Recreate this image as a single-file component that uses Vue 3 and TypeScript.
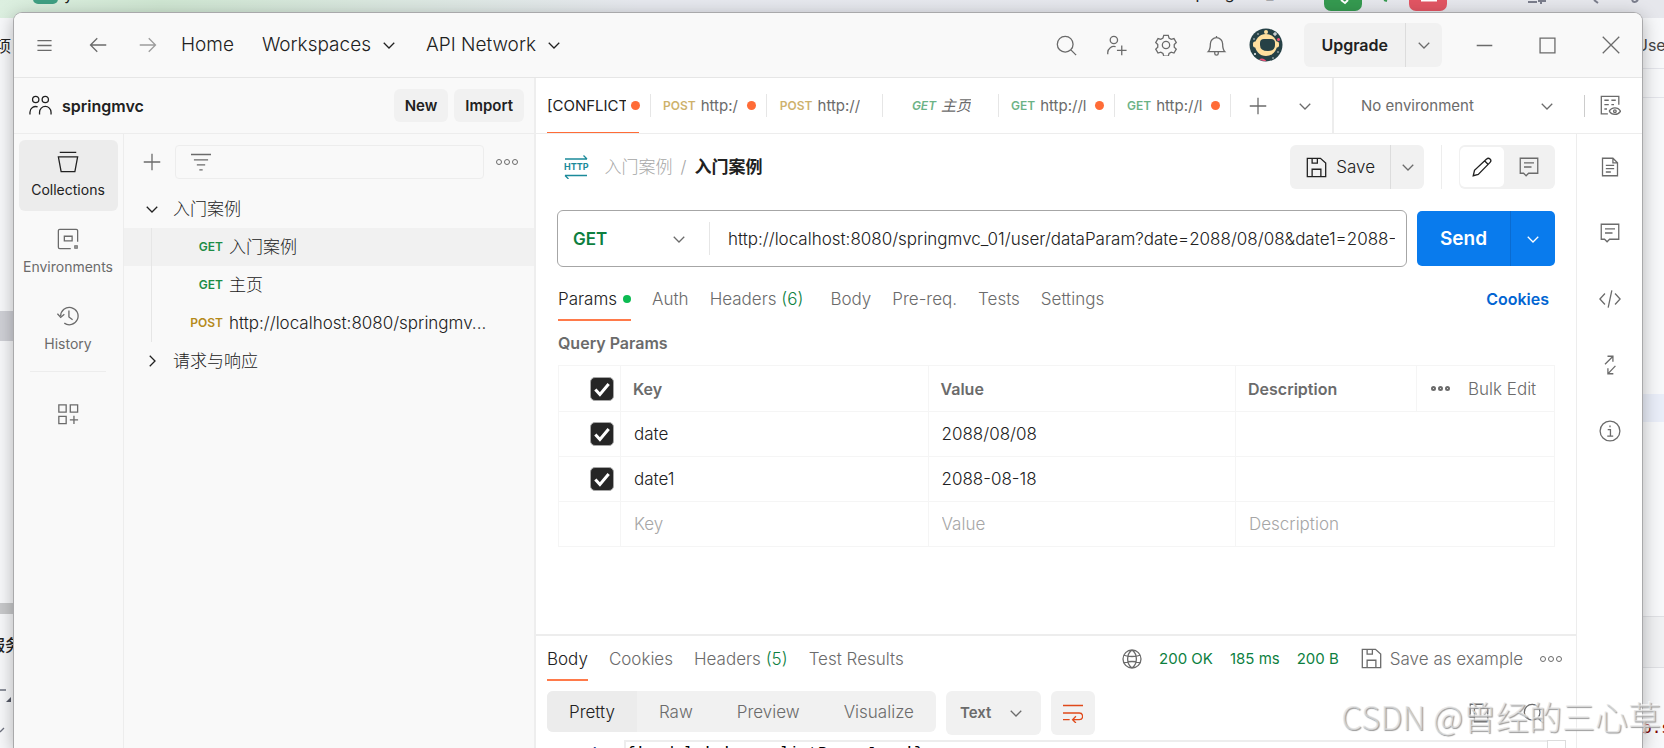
<script setup lang="ts">
import { h, ref } from 'vue'

const shapes: Record<string, string> = {
  chevron: 'M5 9l7 7 7-7',
  chevronRight: 'M9 5l7 7-7 7',
  menu: 'M2 5h20M2 12h20M2 19h20',
  back: 'M23 12H2M11 3l-9 9 9 9',
  forward: 'M1 12h21M13 3l9 9-9 9',
  search: 'M10.5 1.5a9 9 0 1 0 0 18a9 9 0 1 0 0-18M17 17l6 6',
  invite: 'M9 1.5a4.2 4.2 0 1 0 0 8.4a4.2 4.2 0 1 0 0-8.4M2 22v-2a7 7 0 0 1 9-6.600M18 12v11M12.500 17.500h11',
  gear: 'M9.500 1.500h5l.8 3 2.400 1.400 3-.9 2.500 4.300-2.200 2.200v2.800l2.200 2.200-2.500 4.300-3-.9-2.400 1.400-.8 2.800h-5l-.8-2.800-2.400-1.400-3 .9-2.500-4.300 2.200-2.200v-2.800L.8 9.300 3.300 5l3 .9L8.700 4.500zM12 8a4 4 0 1 0 0 8a4 4 0 1 0 0-8',
  bell: 'M2.500 19c2-2 2.500-4 2.500-9a7 7 0 0 1 14 0c0 5 .5 7 2.500 9zM10 19.500v1.500a2 2 0 0 0 4 0v-1.500M12 3V1',
  minus: 'M1 12h22',
  square: 'M1.500 1.500h21v21h-21z',
  close: 'M1 1l22 22M23 1L1 23',
  plus: 'M12 1v22M1 12h22',
  filter: 'M0 3h24M3.500 9.500h17M7 15.500h10M10 21.500h4',
  people: 'M7 2.500a3.300 3.300 0 1 0 0 6.600a3.300 3.300 0 1 0 0-6.600M17 2.500a3.300 3.300 0 1 0 0 6.600a3.300 3.300 0 1 0 0-6.600M1 21.500v-2.500a6 6 0 0 1 8-5.600M11 21.500v-2.500a6 6 0 0 1 12 0v2.500',
  collections: 'M3 1.500h18M1.500 6.500h21L19.500 22.500h-15z',
  environments: 'M22.500 15V3a1.500 1.500 0 0 0-1.500-1.500H3A1.500 1.500 0 0 0 1.500 3v18A1.500 1.500 0 0 0 3 22.500h12M8 9h8.500v5H8zM19.500 19.500h2.500v2.500h-2.500z',
  history: 'M4 12a9.500 9.500 0 1 1 4 7.800M0.500 9.500L4 13.500l4-3.500M13 6v7l4 3',
  apps: 'M2 2h8v8H2zM14.500 2h8v8h-8zM2 14.500h8v8H2zM18.500 14v9M14 18.500h9',
  save: 'M2 1.500h14.500L22.500 7v15.500h-21V1.500zM7 2v5h6V2M7 22v-8h10v8',
  pencil: 'M1.500 22.500l1.500-6.500L17.500 2.500a2.800 2.800 0 0 1 4.200 4L7.500 21zM15 4.500l4.500 4.500',
  comment: 'M1.500 1.500h21v18H11.500l-3 3-3-3h-4zM6 7h12M6 12h9',
  doc: 'M3 1.500h12.500L21 7v15.500H3zM15.500 1.500V7H21M7 10h10M7 14h10M7 18h6',
  code: 'M6.500 6L1 12l5.500 6M17.500 6L23 12l-5.500 6M14 2.500L10 21.500',
  sync: 'M6 11L15 2M9 1.500H15.500V8M18.500 13L10 22M16 22.500H9.500V16',
  info: 'M12 1.200a10.800 10.800 0 1 0 0 21.600a10.800 10.800 0 1 0 0-21.600M9.500 10.500h3v6.500M9 17.500h6.500M12 6v2',
  globe: 'M12 1.200a10.800 10.800 0 1 0 0 21.600a10.800 10.800 0 1 0 0-21.600M12 1.200c-7 5-7 16.600 0 21.600M12 1.200c7 5 7 16.600 0 21.600M2.500 7.500c5 2 14 2 19 0M2.500 16.500c5-2 14-2 19 0',
  envEye: 'M9 21.500H1.500V1.500h20V11M5 6h5M13 6h5M5 11h5M13 11h3M5 16h3M10.500 18.500c3-5 10-5 13 0c-3 5-10 5-13 0M17 17a1.500 1.500 0 1 0 0 3a1.500 1.500 0 1 0 0-3',
  wrap: 'M0 3h24M0 12h19.500a4 4 0 0 1 0 8H12M15.500 16L11.500 20l4 4M0 20h8',
  copy: 'M6.500 6.500h16v16h-16zM17 6V1.500H1.500V17H6',
  http: 'M1 4h22M19.500 0.500L23 4M1 20.500h22M1 20.500L4.500 24',
  tick: 'M4 12.500l5.500 6L20 6',
}

function Icon(props: { name: string; size?: number | string }) {
  const s = Number(props.size ?? 20)
  return h(
    'svg',
    { width: s, height: s, viewBox: '0 0 24 24', fill: 'none', stroke: 'currentColor', 'aria-hidden': 'true' },
    [h('path', { d: shapes[props.name], 'vector-effect': 'non-scaling-stroke' })],
  )
}

interface Tab { method?: string; name: string; dirty?: boolean; italic?: boolean }
const tabs: Tab[] = [
  { name: '[CONFLICT', dirty: true },
  { method: 'POST', name: 'http:/', dirty: true },
  { method: 'POST', name: 'http://' },
  { method: 'GET', name: '主页', italic: true },
  { method: 'GET', name: 'http://l', dirty: true },
  { method: 'GET', name: 'http://l', dirty: true },
]

const rail = [
  { icon: 'collections', label: 'Collections' },
  { icon: 'environments', label: 'Environments' },
  { icon: 'history', label: 'History' },
]

const requests = [
  { method: 'GET', name: '入门案例' },
  { method: 'GET', name: '主页' },
  { method: 'POST', name: 'http://localhost:8080/springmv...' },
]

const requestTabs = [
  { name: 'Params', dot: true },
  { name: 'Auth' },
  { name: 'Headers', count: 6 },
  { name: 'Body' },
  { name: 'Pre-req.' },
  { name: 'Tests' },
  { name: 'Settings' },
]
const responseTabs = [
  { name: 'Body' },
  { name: 'Cookies' },
  { name: 'Headers', count: 5 },
  { name: 'Test Results' },
]
const views = ['Pretty', 'Raw', 'Preview', 'Visualize']
const sideTools = [
  { icon: 'doc', label: 'Documentation' },
  { icon: 'comment', label: 'Comments' },
  { icon: 'code', label: 'Code' },
  { icon: 'sync', label: 'Related requests' },
  { icon: 'info', label: 'Info' },
]

const url = ref('http://localhost:8080/springmvc_01/user/dataParam?date=2088/08/08&date1=2088-08-18')
const params = ref([
  { on: true, key: 'date', value: '2088/08/08', description: '' },
  { on: true, key: 'date1', value: '2088-08-18', description: '' },
])
const allOn = ref(true)
</script>

<template>
  <div class="desktop">
    <div class="ide" aria-hidden="true">
      <div class="ide-top"></div>
      <span class="ide-badge"></span>
      <span class="ide-text project">y</span>
      <span class="ide-text run">springmvc_01</span>
      <span class="ide-btn go"></span>
      <span class="ide-btn stop"></span>
      <svg class="ide-marks" width="330" height="8" viewBox="0 0 330 8" fill="none">
        <path d="M11 0l4 3 3-3" stroke="#fff" stroke-width="2" />
        <path d="M91 0h16" stroke="#fff" stroke-width="3" />
        <path d="M54 0l3 1" stroke="#359a50" stroke-width="2" />
        <path d="M198 2h9M211 0v4M208 1h8M264 0l4 3M302 0q2 4 6 0" stroke="#7a7d8c" stroke-width="2" />
      </svg>
      <svg class="ide-corner" width="13" height="60" viewBox="0 0 13 60" fill="none">
        <path d="M0 5h6M0 47l4-4" stroke="#6c707e" />
        <path d="M11 12v5H6z" fill="#555967" />
      </svg>
      <span class="ide-text title">项目</span>
      <span class="ide-text user">User</span>
      <span class="ide-block a"></span>
      <span class="ide-block b"></span>
      <span class="ide-block c"></span>
      <span class="ide-block d"></span>
      <span class="ide-block e"></span>
      <span class="ide-text service">服务</span>
      <span class="ide-text trace">b.s</span>
    </div>

    <div class="window">
      <header class="topbar">
        <button class="ghost menu" aria-label="Menu"><Icon name="menu" size="17" /></button>
        <button class="ghost back" aria-label="Back"><Icon name="back" size="18" /></button>
        <button class="ghost forward" aria-label="Forward"><Icon name="forward" size="18" /></button>
        <nav class="topnav">
          <a href="#">Home</a>
          <a href="#">Workspaces <Icon name="chevron" size="18" /></a>
          <a href="#">API Network <Icon name="chevron" size="18" /></a>
        </nav>
        <div class="top-tools">
          <button class="ghost" aria-label="Search"><Icon name="search" size="21" /></button>
          <button class="ghost" aria-label="Invite"><Icon name="invite" size="21" /></button>
          <button class="ghost" aria-label="Settings"><Icon name="gear" size="22" /></button>
          <button class="ghost" aria-label="Notifications"><Icon name="bell" size="21" /></button>
          <button class="ghost" aria-label="Account">
            <svg width="34" height="34" viewBox="0 0 34 34">
              <circle cx="17" cy="17" r="16.500" fill="#264146" />
              <path d="M10 31.500a5 5 0 0 1 7.500 1.800 16 16 0 0 1-7.500-1.800z" fill="#ef5079" />
              <circle cx="17" cy="17" r="11" fill="#ffdf9f" />
              <rect x="4" y="13.500" width="26" height="6" rx="2" fill="#ffdf9f" />
              <circle cx="17" cy="4" r="2" fill="#ffdf9f" />
              <path d="M11 15q0-4 4-4h7q4 0 4 4v2q0 6-7 6-8 0-8-6z" fill="#264146" />
              <circle cx="29.500" cy="11.500" r="1.500" fill="#ef5079" />
              <path d="M26 4v4M24 6h4M6 25v2M5 26h2" stroke="#fff" stroke-width="1" />
              <circle cx="9" cy="6" r=".7" fill="#fff" />
              <circle cx="5" cy="11" r=".7" fill="#fff" />
              <circle cx="29" cy="24" r=".7" fill="#fff" />
              <circle cx="24" cy="30" r=".7" fill="#fff" />
            </svg>
          </button>
        </div>
        <div class="split upgrade">
          <button>Upgrade</button>
          <button aria-label="Upgrade options"><Icon name="chevron" size="18" /></button>
        </div>
        <div class="win-tools">
          <button class="ghost" aria-label="Minimize"><Icon name="minus" size="17" /></button>
          <button class="ghost" aria-label="Maximize"><Icon name="square" size="17" /></button>
          <button class="ghost" aria-label="Close"><Icon name="close" size="18" /></button>
        </div>
      </header>

      <div class="shell">
        <aside class="side">
          <div class="workspace">
            <Icon name="people" size="23" />
            <h1>springmvc</h1>
            <button class="soft">New</button>
            <button class="soft">Import</button>
          </div>
          <div class="side-body">
            <nav class="rail">
              <button v-for="(r, i) in rail" :key="r.label" :class="{ active: i === 0 }">
                <Icon :name="r.icon" size="22" />
                <span>{{ r.label }}</span>
              </button>
              <hr />
              <button class="apps" aria-label="Configure sidebar"><Icon name="apps" size="22" /></button>
            </nav>
            <div class="tree">
              <div class="tree-tools">
                <button class="ghost" aria-label="Create"><Icon name="plus" size="18" /></button>
                <label class="filter"><Icon name="filter" size="20" /><input aria-label="Filter collections" /></label>
                <button class="ghost dots" aria-label="More"><i></i><i></i><i></i></button>
              </div>
              <button class="folder"><Icon name="chevron" size="18" />入门案例</button>
              <ul>
                <li v-for="(r, i) in requests" :key="i" :class="{ selected: i === 0 }">
                  <span class="method" :class="r.method.toLowerCase()">{{ r.method }}</span>
                  <a href="#">{{ r.name }}</a>
                </li>
              </ul>
              <button class="folder"><Icon name="chevronRight" size="18" />请求与响应</button>
            </div>
          </div>
        </aside>

        <main>
          <div class="tabrow">
            <div class="tabs">
              <button
                v-for="(t, i) in tabs"
                :key="i"
                class="tab"
                :class="{ active: i === 0, clean: !t.dirty, italic: t.italic }"
              >
                <span class="tab-in">
                  <span v-if="t.method" class="method" :class="t.method.toLowerCase()">{{ t.method }}</span>
                  <span class="name">{{ t.name }}</span>
                  <b v-if="t.dirty" class="dirty"></b>
                </span>
              </button>
              <button class="ghost add" aria-label="New tab"><Icon name="plus" size="18" /></button>
              <button class="ghost" aria-label="All tabs"><Icon name="chevron" size="18" /></button>
            </div>
            <div class="env">
              <label class="pick">
                <select aria-label="Environment"><option>No environment</option></select>
                <Icon name="chevron" size="18" />
              </label>
              <button class="ghost quick" aria-label="Environment quick look"><Icon name="envEye" size="21" /></button>
            </div>
          </div>

          <div class="main-body">
            <div class="content">
              <section class="request">
                <div class="req-head">
                  <span class="http"><Icon name="http" size="24" /><b>HTTP</b></span>
                  <div class="crumbs"><a href="#">入门案例</a><span>/</span><strong>入门案例</strong></div>
                  <div class="split save">
                    <button><Icon name="save" size="21" />Save</button>
                    <button aria-label="Save options"><Icon name="chevron" size="18" /></button>
                  </div>
                  <div class="modes">
                    <button class="active" aria-label="Edit"><Icon name="pencil" size="20" /></button>
                    <button aria-label="Comments"><Icon name="comment" size="20" /></button>
                  </div>
                </div>

                <div class="url-row">
                  <div class="url-box">
                    <label class="pick verb">
                      <select aria-label="Method"><option>GET</option><option>POST</option></select>
                      <Icon name="chevron" size="18" />
                    </label>
                    <input v-model="url" aria-label="Request URL" />
                  </div>
                  <div class="send">
                    <button>Send</button>
                    <button aria-label="Send options"><Icon name="chevron" size="18" /></button>
                  </div>
                </div>

                <div class="details">
                  <div class="subtabs req-tabs">
                    <button v-for="(t, i) in requestTabs" :key="t.name" :class="{ active: i === 0 }">
                      {{ t.name }}<em v-if="t.count"> ({{ t.count }})</em><i v-if="t.dot"></i>
                    </button>
                    <a href="#">Cookies</a>
                  </div>

                  <h2>Query Params</h2>
                  <table>
                    <colgroup><col class="c-check" /><col class="c-key" /><col class="c-value" /><col class="c-desc" /><col class="c-bulk" /></colgroup>
                    <thead>
                      <tr>
                        <th><label class="check"><input v-model="allOn" type="checkbox" aria-label="All parameters" /><Icon name="tick" size="20" /></label></th>
                        <th>Key</th>
                        <th>Value</th>
                        <th>Description</th>
                        <th><div class="bulk"><button class="ghost dots small" aria-label="Columns"><i></i><i></i><i></i></button><button class="ghost">Bulk Edit</button></div></th>
                      </tr>
                    </thead>
                    <tbody>
                      <tr v-for="(p, i) in params" :key="i">
                        <td><label class="check"><input v-model="p.on" type="checkbox" :aria-label="'Use ' + p.key" /><Icon name="tick" size="20" /></label></td>
                        <td><input v-model="p.key" aria-label="Key" /></td>
                        <td><input v-model="p.value" aria-label="Value" /></td>
                        <td colspan="2"><input v-model="p.description" aria-label="Description" /></td>
                      </tr>
                      <tr>
                        <td></td>
                        <td><input placeholder="Key" aria-label="New key" /></td>
                        <td><input placeholder="Value" aria-label="New value" /></td>
                        <td colspan="2"><input placeholder="Description" aria-label="New description" /></td>
                      </tr>
                    </tbody>
                  </table>
                </div>
              </section>

              <section class="response">
                <div class="res-head">
                  <div class="subtabs">
                    <button v-for="(t, i) in responseTabs" :key="t.name" :class="{ active: i === 0 }">
                      {{ t.name }}<em v-if="t.count"> ({{ t.count }})</em>
                    </button>
                  </div>
                  <div class="status">
                    <Icon name="globe" size="20" />
                    <span>200 OK</span><span>185 ms</span><span>200 B</span>
                    <button class="ghost example"><Icon name="save" size="21" />Save as example</button>
                    <button class="ghost dots" aria-label="More"><i></i><i></i><i></i></button>
                  </div>
                </div>
                <div class="res-tools">
                  <div class="views">
                    <button v-for="(v, i) in views" :key="v" :class="{ active: i === 0 }">{{ v }}</button>
                  </div>
                  <label class="pick format">
                    <select aria-label="Format"><option>Text</option></select>
                    <Icon name="chevron" size="18" />
                  </label>
                  <button class="wrap" aria-label="Wrap lines"><Icon name="wrap" size="20" /></button>
                  <div class="res-right">
                    <button class="ghost" aria-label="Copy"><Icon name="copy" size="20" /></button>
                    <button class="ghost" aria-label="Search response"><Icon name="search" size="21" /></button>
                  </div>
                </div>
                <div class="editor">
                  <span class="ln">1</span>
                  <code>{'module':'user listParamJson'}</code>
                  <span class="map"></span>
                </div>
              </section>
            </div>
            <aside class="tools">
              <button v-for="t in sideTools" :key="t.icon" :aria-label="t.label">
                <Icon :name="t.icon" :size="t.icon === 'info' || t.icon === 'code' ? 22 : 20" />
              </button>
            </aside>
          </div>
        </main>
      </div>
    </div>
    <div class="watermark">CSDN @曾经的三心草</div>
  </div>
</template>

<style>
html,
body {
  margin: 0;
  overflow: hidden;
}
</style>

<style scoped>
.desktop {
  position: relative;
  height: 100vh;
  overflow: hidden;
  display: flex;
  padding: 12px 21px 0 13px;
  box-sizing: border-box;
  background: #f7f8fa;
  font-family: Inter, "Noto Sans CJK SC", sans-serif;
  font-size: 17px;
  font-weight: 300;
  line-height: 20px;
  color: #212121;
}
.desktop *,
.desktop *::before {
  box-sizing: border-box;
}
button,
input,
select {
  font: inherit;
  color: inherit;
  margin: 0;
  padding: 0;
  border: 0;
  background: none;
  min-width: 0;
}
a {
  color: inherit;
  text-decoration: none;
}
svg {
  flex: none;
  display: block;
  stroke-width: 1.3px;
}
.ghost {
  flex: none;
  display: flex;
  align-items: center;
  justify-content: center;
  color: #6b6b6b;
}

/* editor window behind */
.ide > * {
  position: absolute;
}
.ide-top {
  inset: 0 0 auto 0;
  height: 18px;
  background: linear-gradient(90deg, #dcefe0 0, #cfe6d2 160px, #e6e8ee 640px, #e6e7ec 100%);
}
.ide-badge {
  left: 33px;
  top: -20px;
  width: 25px;
  height: 24px;
  border-radius: 5px;
  background: #3f9f83;
}
.ide-btn {
  top: -26px;
  width: 38px;
  height: 37px;
  border-radius: 7px;
}
.ide-btn.go {
  left: 1324px;
  background: #359a50;
}
.ide-btn.stop {
  left: 1409px;
  background: #e25563;
}
.ide-marks {
  left: 1330px;
  top: 0;
}
.ide-corner {
  left: 0;
  top: 685px;
}
.ide-text {
  font-size: 16px;
  font-weight: 400;
  line-height: 20px;
  white-space: nowrap;
}
.ide-text.project {
  left: 64px;
  top: -16px;
}
.ide-text.run {
  left: 1187px;
  top: -17px;
}
.ide-text.title {
  left: -5px;
  top: 36px;
}
.ide-text.user {
  left: 1636px;
  top: 35px;
  color: #444;
}
.ide-text.service {
  left: -11px;
  top: 635px;
  font-weight: 500;
}
.ide-text.trace {
  left: 1642px;
  top: 718px;
  font-family: "DejaVu Sans Mono", monospace;
  color: #7f0000;
}
.ide-block.a {
  left: 0;
  top: 311px;
  width: 13px;
  height: 30px;
  background: #cfd0d6;
}
.ide-block.b {
  left: 0;
  top: 603px;
  width: 13px;
  height: 11px;
  background: #c8c9cb;
}
.ide-block.c {
  right: 0;
  top: 68px;
  width: 24px;
  height: 30px;
  border: solid #e3e4ea;
  border-width: 1px 0;
}
.ide-block.d {
  right: 0;
  top: 394px;
  width: 24px;
  height: 28px;
  background: #e9edf8;
}
.ide-block.e {
  right: 0;
  top: 616px;
  width: 24px;
  height: 52px;
  border: solid #dfe0e4;
  border-width: 1px 0;
  background: #f0f1f3;
}

.window {
  position: relative;
  flex: 1;
  min-width: 0;
  display: flex;
  flex-direction: column;
  border: 1px solid #a9a9ab;
  border-bottom: 0;
  border-radius: 9px 9px 0 0;
  background: #fff;
  overflow: hidden;
  box-shadow: 0 4px 18px rgba(0, 0, 0, 0.28);
}

/* top bar */
.topbar {
  flex: none;
  display: flex;
  align-items: center;
  height: 65px;
  padding: 0 22px;
  background: #f9f9f9;
  border-bottom: 1px solid #e6e6e6;
}
.back {
  margin-left: 36px;
}
.forward {
  margin: 0 24px 0 32px;
  opacity: 0.65;
}
.topnav {
  display: flex;
  gap: 28px;
  font-size: 19px;
}
.topnav a {
  display: flex;
  align-items: center;
  gap: 9px;
}
.top-tools {
  display: flex;
  align-items: center;
  margin-left: auto;
}
.top-tools button {
  width: 50px;
}
.split {
  display: flex;
  height: 44px;
  border-radius: 6px;
  background: #f1f1f1;
}
.split button {
  display: flex;
  align-items: center;
  justify-content: center;
  gap: 9px;
}
.split button:last-child {
  width: 35px;
  border-left: 1px solid #dcdcdc;
  color: #6b6b6b;
}
.upgrade {
  margin: 0 34px 0 13px;
  font-size: 16px;
  font-weight: 600;
}
.upgrade button:first-child {
  padding: 0 17px;
}
.upgrade button:last-child {
  width: 37px;
}
.win-tools {
  display: flex;
  align-items: center;
  gap: 46px;
}

/* left side */
.shell {
  flex: 1;
  min-height: 0;
  display: flex;
}
.side {
  flex: none;
  width: 522px;
  display: flex;
  flex-direction: column;
  background: #f9f9f9;
  border-right: 2px solid #eee;
}
.workspace {
  flex: none;
  display: flex;
  align-items: center;
  gap: 6px;
  height: 56px;
  padding: 0 10px 0 15px;
  border-bottom: 1px solid #ededed;
}
h1 {
  flex: 1;
  margin: 0 0 0 4px;
  font-size: 16px;
  font-weight: 600;
}
.soft {
  height: 33px;
  padding: 0 11px;
  border-radius: 6px;
  background: #f1f1f1;
  font-size: 15px;
  font-weight: 600;
}
.side-body {
  flex: 1;
  display: flex;
  min-height: 0;
}
.rail {
  flex: none;
  width: 110px;
  padding: 6px 5px;
  border-right: 1px solid #ededed;
}
.rail button {
  display: flex;
  flex-direction: column;
  align-items: center;
  justify-content: center;
  gap: 8px;
  width: 100%;
  height: 71px;
  margin-bottom: 6px;
  padding: 0 1px 2px 0;
  border-radius: 6px;
  font-size: 14px;
  font-weight: 400;
  line-height: 18px;
  color: #6b6b6b;
}
.rail button.active {
  background: #ececec;
  color: #212121;
}
.rail hr {
  margin: 0 12px 7px 11px;
  border: 0;
  border-top: 1px solid #ededed;
}
.tree {
  flex: 1;
  min-width: 0;
}
.tree-tools {
  display: flex;
  align-items: center;
  gap: 12px;
  padding: 11px 16px 11px 19px;
}
.filter {
  flex: 1;
  min-width: 0;
  display: flex;
  align-items: center;
  height: 34px;
  margin-left: 2px;
  padding: 0 15px;
  gap: 10px;
  border: 1px solid #ededed;
  border-radius: 4px;
  color: #6b6b6b;
}
.filter input {
  flex: 1;
}
.dots {
  gap: 2px;
}
.dots i {
  width: 6px;
  height: 6px;
  border: 1px solid #6b6b6b;
  border-radius: 50%;
}
.dots.small i {
  width: 5px;
  height: 5px;
  border-width: 2px;
}
.folder {
  display: flex;
  align-items: center;
  gap: 12px;
  width: 100%;
  height: 38px;
  padding-left: 19px;
  text-align: left;
}
.tree ul {
  margin: 0;
  padding: 0;
  list-style: none;
}
.tree li {
  display: flex;
  align-items: center;
  gap: 6px;
  height: 38px;
  background: linear-gradient(#e6e6e6, #e6e6e6) 27px 0 / 1px 100% no-repeat;
}
.tree li.selected {
  background-color: #f1f1f1;
}
.method {
  flex: none;
  font-size: 12px;
  font-weight: 600;
}
.tree .method {
  width: 99px;
  text-align: right;
}
.method.get {
  color: #1c8c46;
}
.method.post {
  color: #b58a1b;
}

/* request tabs */
main {
  flex: 1;
  min-width: 0;
  display: flex;
  flex-direction: column;
}
.tabrow {
  flex: none;
  display: flex;
  height: 56px;
  border-bottom: 1px solid #ededed;
}
.tabs {
  flex: 1;
  display: flex;
  padding-left: 11px;
  border-right: 2px solid #ededed;
}
.tab {
  display: flex;
  align-items: center;
  width: 116px;
  font-size: 15px;
  font-weight: 400;
  color: #6b6b6b;
}
.tab .method {
  opacity: 0.65;
}
.tab-in {
  flex: 1;
  min-width: 0;
  display: flex;
  align-items: center;
  justify-content: center;
  gap: 5px;
  height: 23px;
  padding: 0 10px 0 12px;
  border-right: 1px solid #e6e6e6;
}
.tab .name {
  flex: 1;
  text-align: left;
  white-space: nowrap;
  overflow: hidden;
}
.tab.clean .name {
  flex: none;
}
.tab.clean:not(.italic) .tab-in {
  padding-right: 21px;
}
.tab.italic {
  font-style: italic;
}
.tab.active {
  width: 104px;
  color: #212121;
  background: linear-gradient(#ff6c37, #ff6c37) 0 100% / 92px 1px no-repeat;
}
.tab.active .tab-in {
  padding-left: 0;
}
.dirty {
  flex: none;
  width: 9px;
  height: 9px;
  border-radius: 50%;
  background: #ff6c37;
}
.add {
  margin: 0 29px 0 18px;
}
.env {
  flex: none;
  display: flex;
  align-items: center;
  width: 308px;
  padding: 0 21px 0 27px;
  font-size: 15px;
  font-weight: 400;
  color: #6b6b6b;
}
.pick {
  display: grid;
  align-items: center;
}
.pick > * {
  grid-area: 1 / 1;
}
.pick > svg {
  justify-self: end;
  pointer-events: none;
  color: #6b6b6b;
}
.pick select {
  appearance: none;
  outline: 0;
}
.env .pick {
  width: 195px;
}
.quick {
  margin-left: auto;
  height: 22px;
  padding-left: 15px;
  border-left: 1px solid #ccc;
}

/* request */
.main-body {
  flex: 1;
  min-height: 0;
  display: flex;
}
.content {
  flex: 1;
  min-width: 0;
  display: flex;
  flex-direction: column;
}
.request {
  flex: 1;
  min-height: 0;
  padding: 11px 21px 0;
}
.req-head {
  display: flex;
  align-items: center;
}
.http {
  display: grid;
  place-items: center;
  margin-left: 7px;
  color: #1b8a9a;
}
.http > * {
  grid-area: 1 / 1;
}
.http b {
  font-size: 9px;
  font-weight: 700;
}
.crumbs {
  flex: 1;
  display: flex;
  gap: 8px;
  margin-left: 16px;
  color: #a6a6a6;
}
.crumbs strong {
  color: #212121;
  font-weight: 700;
}
.save button:first-child {
  padding: 0 15px 0 16px;
}
.save button:last-child {
  width: 34px;
}
.modes {
  display: flex;
  gap: 3px;
  margin-left: 35px;
  padding: 2px 4px 2px 1px;
  border-radius: 6px;
  background: #f1f1f1;
  position: relative;
}
.modes::before {
  content: "";
  position: absolute;
  left: -18px;
  top: 0;
  bottom: 0;
  border-left: 1px solid #ededed;
}
.modes button {
  display: grid;
  place-items: center;
  width: 44px;
  height: 40px;
  border-radius: 5px;
  color: #6b6b6b;
}
.modes .active {
  background: #fff;
  color: #212121;
}
.url-row {
  display: flex;
  align-items: center;
  gap: 10px;
  margin-top: 21px;
}
.url-box {
  flex: 1;
  min-width: 0;
  display: flex;
  align-items: center;
  height: 57px;
  padding-right: 11px;
  border: 1px solid #a6a6a6;
  border-radius: 6px;
}
.verb {
  flex: none;
  width: 152px;
  height: 33px;
  padding: 0 21px 0 15px;
  border-right: 1px solid #e6e6e6;
  font-weight: 600;
  color: #0d7f3f;
}
.url-box input {
  flex: 1;
  margin-left: 18px;
  height: 40px;
  outline: 0;
}
.send {
  display: flex;
  height: 55px;
  border-radius: 5px;
  background: #097bed;
  color: #fff;
}
.send svg {
  color: #fff;
}
.send button {
  display: grid;
  place-items: center;
}
.send button:first-child {
  width: 93px;
  font-size: 19px;
  font-weight: 600;
}
.send button:last-child {
  width: 45px;
  border-left: 1px solid #0a6bd0;
}
.details {
  padding-left: 1px;
}
.subtabs {
  display: flex;
  gap: 21px;
  color: #6b6b6b;
}
.subtabs button {
  display: flex;
  align-items: center;
  padding-top: 2px;
  white-space: pre;
  border-bottom: 2px solid transparent;
}
.subtabs .active {
  color: #212121;
  border-bottom-color: #ff7a4a;
}
.subtabs em {
  font-style: normal;
  color: #0d7f3f;
}
.subtabs i {
  width: 8px;
  height: 8px;
  margin-left: 6px;
  border-radius: 50%;
  background: #0cbb52;
}
.req-tabs {
  height: 44px;
  margin-top: 10px;
}
.req-tabs em {
  padding-right: 6px;
}
.subtabs a {
  margin: 0 6px 0 auto;
  align-self: center;
  font-size: 16px;
  font-weight: 600;
  color: #0265d2;
}
h2 {
  margin: 12px 0;
  font-size: 16px;
  line-height: 20px;
  font-weight: 600;
  color: #6b6b6b;
}
table {
  width: 100%;
  table-layout: fixed;
  border-collapse: collapse;
  border: 1px solid #ededed;
}
.c-check {
  width: 62px;
}
.c-desc {
  width: 181px;
}
.c-bulk {
  width: 138px;
}
th,
td {
  height: 45px;
  padding: 0 0 0 13px;
  border: 1px solid #f5f5f5;
  text-align: left;
}
th {
  height: 46px;
  padding-left: 12px;
  font-size: 16px;
  font-weight: 600;
  color: #6b6b6b;
}
th:first-child,
td:first-child {
  padding-left: 31px;
}
td input {
  display: block;
  width: 100%;
  outline: 0;
}
td input::placeholder {
  color: #a6a6a6;
  opacity: 1;
}
.check {
  display: grid;
  width: 24px;
  place-items: center;
}
.check > * {
  grid-area: 1 / 1;
}
.check input {
  appearance: none;
  width: 24px;
  height: 24px;
  border: 1px solid #a6a6a6;
  border-radius: 5px;
}
.check input:checked {
  background: #262626;
}
.check svg {
  color: #fff;
  stroke-width: 3px;
  pointer-events: none;
}
.bulk {
  display: flex;
  gap: 18px;
  padding-left: 2px;
  font-size: 17px;
  font-weight: 300;
}

/* response */
.response {
  flex: none;
  height: 114px;
  border-top: 2px solid #ededed;
  padding-left: 11px;
}
.res-head {
  display: flex;
  height: 45px;
  padding-right: 14px;
}
.status {
  display: flex;
  align-items: center;
  gap: 17px;
  margin-left: auto;
  font-size: 15px;
  font-weight: 400;
  color: #6b6b6b;
}
.status span {
  color: #0d7f3f;
}
.example {
  margin-left: 5px;
  gap: 8px;
  font-size: 17px;
  font-weight: 300;
}
.res-tools {
  display: flex;
  align-items: flex-start;
  gap: 10px;
  margin-top: 10px;
  height: 49px;
}
.views {
  display: flex;
  height: 41px;
  border-radius: 6px;
  background: #f1f1f1;
  overflow: hidden;
  color: #6b6b6b;
}
.views button {
  padding: 0 22px;
}
.views .active {
  background: #ececec;
  color: #212121;
}
.format {
  width: 95px;
  height: 44px;
  padding: 0 16px 0 14px;
  border-radius: 6px;
  background: #f1f1f1;
  font-size: 15px;
  font-weight: 600;
  color: #6b6b6b;
}
.wrap {
  display: grid;
  place-items: center;
  width: 44px;
  height: 44px;
  border-radius: 6px;
  background: #f1f1f1;
  color: #e0491a;
}
.res-right {
  display: flex;
  align-items: center;
  gap: 34px;
  height: 44px;
  margin: 0 32px 0 auto;
}
.editor {
  display: flex;
  font: 400 16px/20px "Liberation Mono", monospace;
}
.ln {
  width: 77px;
  padding: 4px 25px 0 0;
  text-align: right;
  color: #0b3f8c;
}
.editor code {
  flex: 1;
  padding-top: 2px;
  border: solid #ededed;
  border-width: 2px 0 0 2px;
  font: inherit;
  color: #000;
}
.map {
  width: 19px;
  height: 20px;
  margin-right: 10px;
  border: 1px solid #dcdcdc;
}

.tools {
  flex: none;
  width: 66px;
  border-left: 1px solid #ededed;
  color: #6b6b6b;
}
.tools button {
  display: grid;
  place-items: center;
  width: 100%;
  height: 66px;
}

.watermark {
  position: absolute;
  right: 3px;
  bottom: 10px;
  font: 300 33px/44px "Noto Sans CJK SC", sans-serif;
  color: rgba(225, 225, 225, 0.7);
  text-shadow: 1px 1px 1px #999, -1px -1px 0 rgba(255, 255, 255, 0.6);
  white-space: nowrap;
}
</style>
